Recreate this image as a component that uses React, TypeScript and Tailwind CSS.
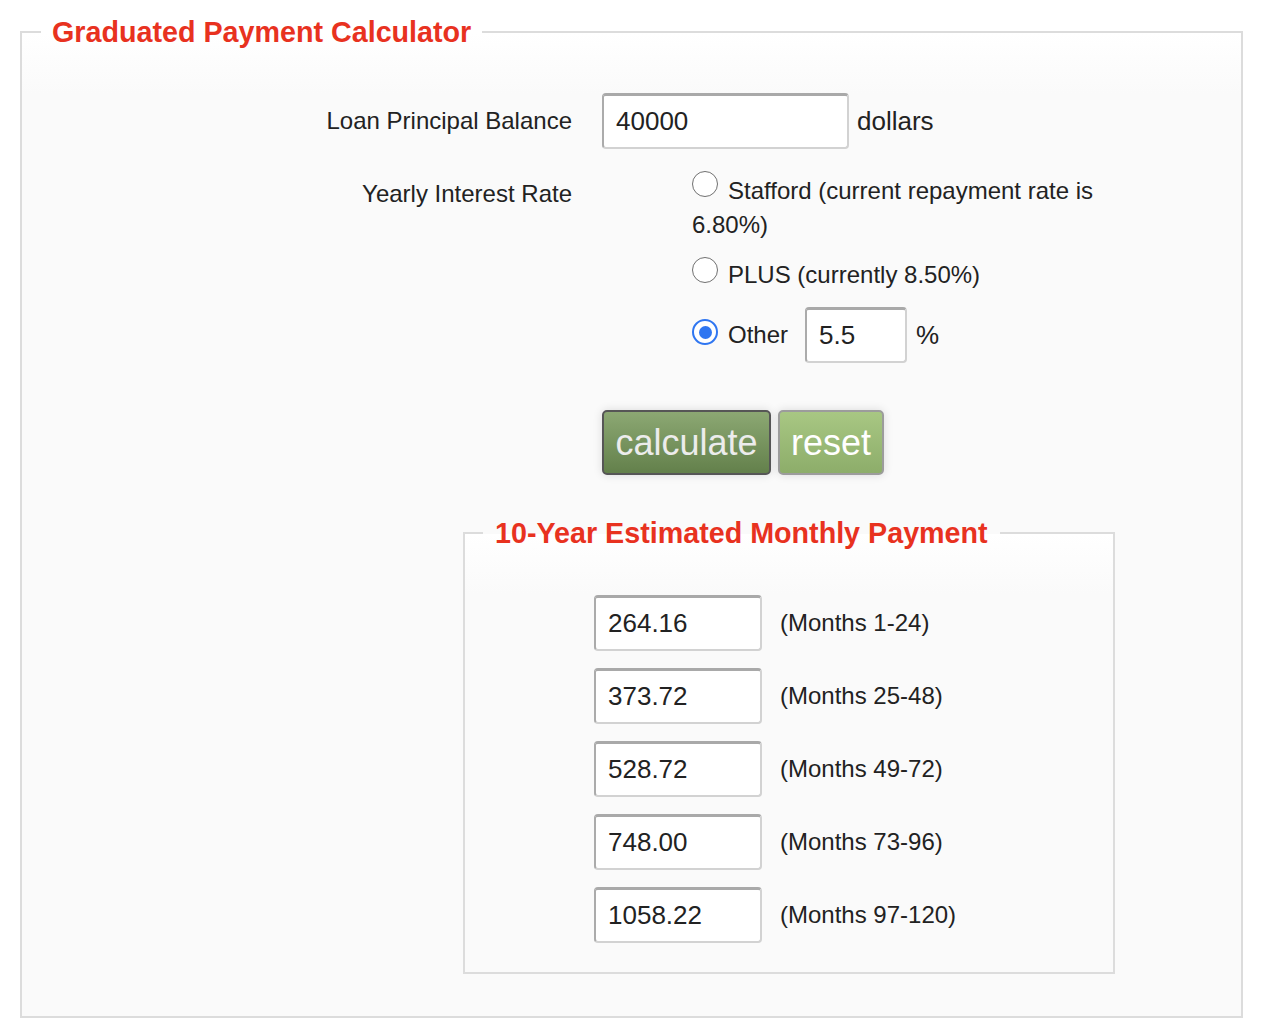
import { useState } from 'react'

function Field({ value, className }: { value: string; className: string }) {
  return (
    <input
      readOnly
      value={value}
      className={`h-[56px] rounded-[4px] border-2 border-t-[3px] border-t-[#a9a9a9] border-l-[#ababab] border-r-[#d2d2d2] border-b-[#d2d2d2] bg-white px-[12px] text-[26px] text-[#222] outline-none ${className}`}
    />
  )
}

function Radio({ checked }: { checked?: boolean }) {
  if (checked) {
    return (
      <span className="inline-flex h-[26px] w-[26px] shrink-0 items-center justify-center rounded-full border-[2.5px] border-[#2f76f1] bg-white">
        <span className="h-[13px] w-[13px] rounded-full bg-[#2f76f1]" />
      </span>
    )
  }
  return <span className="inline-block h-[26px] w-[26px] shrink-0 rounded-full border-[1.5px] border-[#707070] bg-white" />
}

const payments = [
  { value: '264.16', months: '(Months 1-24)' },
  { value: '373.72', months: '(Months 25-48)' },
  { value: '528.72', months: '(Months 49-72)' },
  { value: '748.00', months: '(Months 73-96)' },
  { value: '1058.22', months: '(Months 97-120)' },
]

export default function App() {
  const [rate] = useState('other')

  return (
    <div className="min-h-[1034px] bg-white pt-4 font-['Liberation_Sans',Arial,sans-serif] text-[#222]">
      <fieldset className="ml-5 mr-[19px] border-2 border-[#dcdcdc] bg-[linear-gradient(#fff,#fafafa_60px)] pb-[42px]">
        <legend className="ml-[19px] px-[11px] text-[28.7px] font-bold leading-[32px] text-[#e8321f]">
          Graduated Payment Calculator
        </legend>

        <div className="pt-[45px]">
          {/* principal */}
          <div className="flex items-center">
            <div className="w-[550px] text-right text-[24px]">Loan Principal Balance</div>
            <Field value="40000" className="ml-[30px] w-[247px]" />
            <span className="ml-2 text-[26px]">dollars</span>
          </div>

          {/* interest rate */}
          <div className="mt-[22px] flex items-start">
            <div className="mt-[6px] w-[550px] text-right text-[24px] leading-[34px]">Yearly Interest Rate</div>
            <div className="ml-[120px] w-[430px] text-[24px] leading-[34px]">
              <div>
                <span className="mr-[10px] inline-block align-[2px]">
                  <Radio checked={rate === 'stafford'} />
                </span>
                Stafford (current repayment rate is 6.80%)
              </div>
              <div className="mt-[15px]">
                <span className="mr-[10px] inline-block align-[0px]">
                  <Radio checked={rate === 'plus'} />
                </span>
                PLUS (currently 8.50%)
              </div>
              <div className="mt-[15px] flex h-[56px] items-center">
                <span className="relative -top-[3px] flex">
                  <Radio checked={rate === 'other'} />
                </span>
                <span className="ml-[10px]">Other</span>
                <Field value="5.5" className="ml-[17px] w-[102px]" />
                <span className="ml-[9px] text-[26px]">%</span>
              </div>
            </div>
          </div>

          {/* buttons */}
          <div className="mt-[47px] flex gap-[7px] pl-[580px]">
            <button
              type="button"
              className="h-[65px] w-[169px] rounded-[5px] border-2 border-[#565656] bg-[linear-gradient(#8ca873,#63804b)] text-[36px] text-[#ececec] shadow-[0_0_10px_rgba(0,0,0,0.13)]"
            >
              calculate
            </button>
            <button
              type="button"
              className="h-[65px] w-[106px] rounded-[5px] border-2 border-[#9c9c9c] bg-[linear-gradient(#a8c783,#8dad6a)] text-[36px] text-white shadow-[0_0_10px_rgba(0,0,0,0.13)]"
            >
              reset
            </button>
          </div>

          {/* results */}
          <fieldset className="ml-[441px] mt-[42px] w-[652px] border-2 border-[#dcdcdc] bg-[linear-gradient(#fff,#fafafa_60px)] pb-[29px]">
            <legend className="ml-[18px] px-[12px] text-[28.7px] font-bold leading-[32px] text-[#e8321f]">
              10-Year Estimated Monthly Payment
            </legend>
            <div className="flex flex-col gap-[17px] pl-[129px] pt-[46px]">
              {payments.map((p) => (
                <div key={p.months} className="flex items-center">
                  <Field value={p.value} className="w-[168px]" />
                  <span className="ml-[18px] text-[24px]">{p.months}</span>
                </div>
              ))}
            </div>
          </fieldset>
        </div>
      </fieldset>
    </div>
  )
}
